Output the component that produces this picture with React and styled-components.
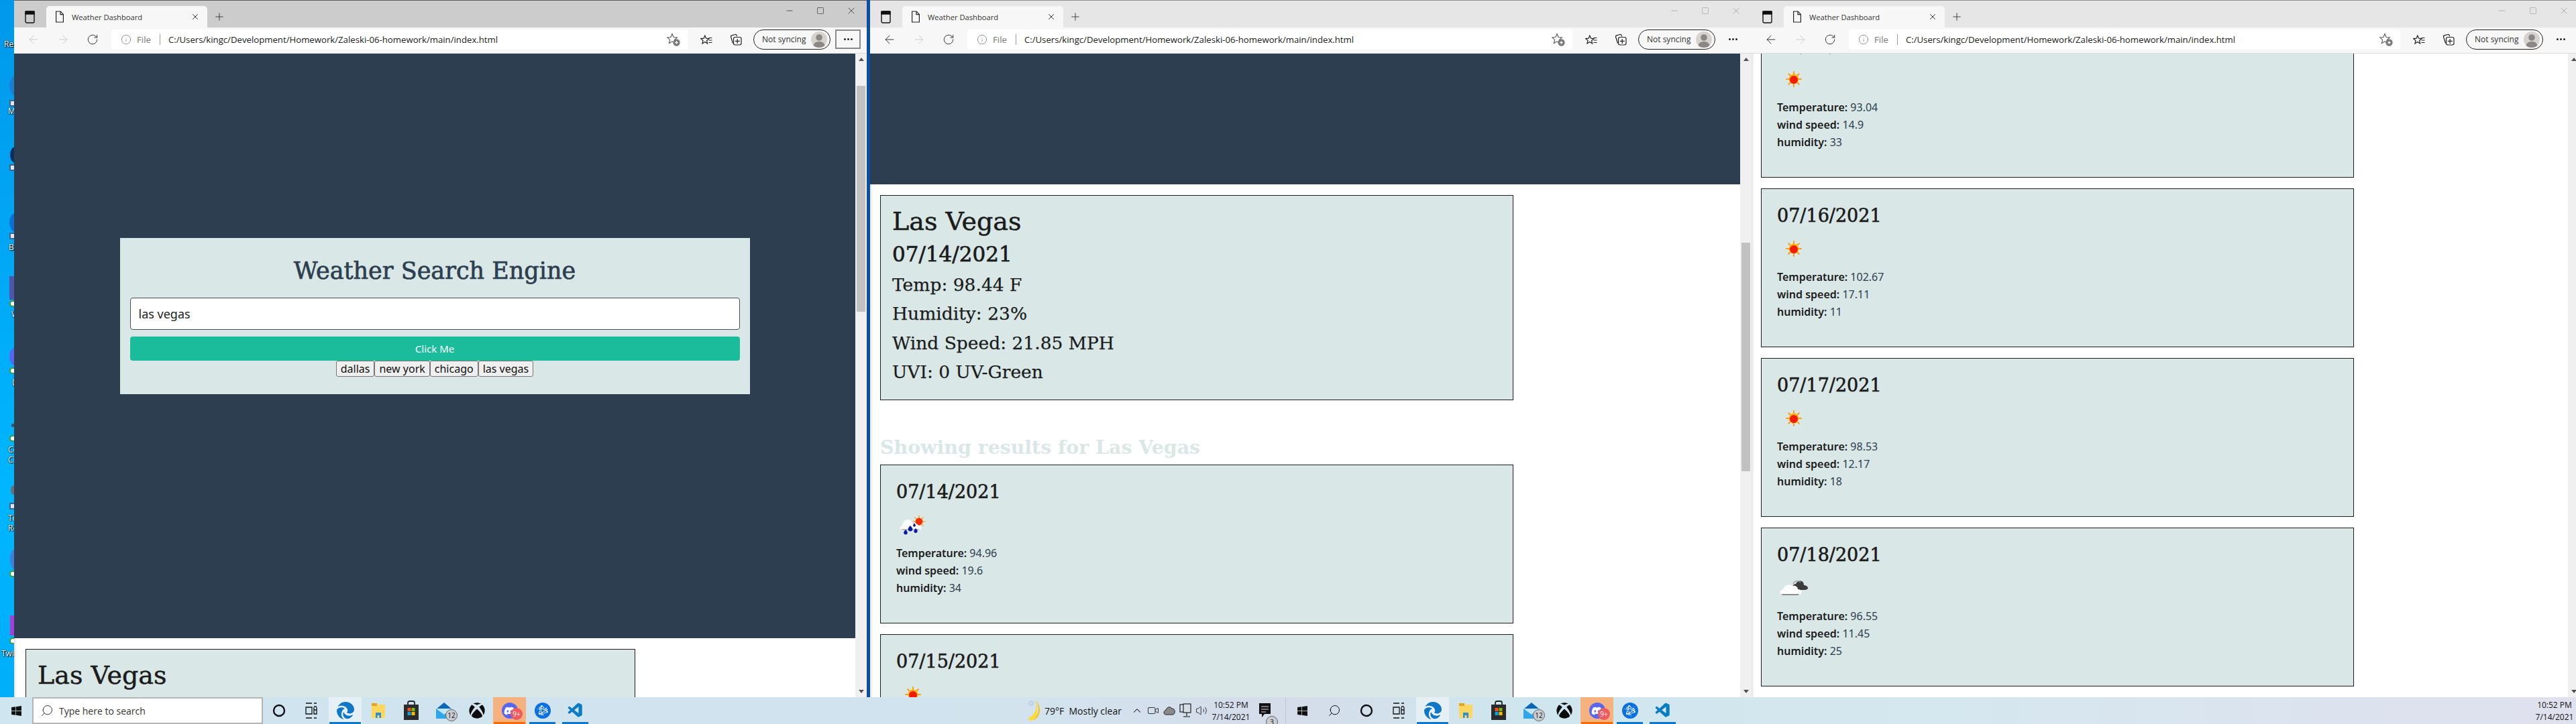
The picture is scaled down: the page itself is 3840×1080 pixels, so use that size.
import React from 'react';
import styled, { createGlobalStyle } from 'styled-components';
import {
  ArrowLeft, ArrowRight, RotateCw, Info, Plus, X, Minus, Square, ChevronUp, Search, Video, Volume2,
} from 'lucide-react';
import { FaWindows, FaXbox, FaDiscord } from 'react-icons/fa';
import { FaEdge, FaBattleNet } from 'react-icons/fa6';
import { VscVscode } from 'react-icons/vsc';

const serif = '"DejaVu Serif", "Liberation Serif", serif';
const body = '"Noto Sans", "Open Sans", sans-serif';
const ui = '"Open Sans", "Noto Sans", sans-serif';

const GlobalStyle = createGlobalStyle`
  html, body { margin: 0; padding: 0; background: #00a8f2; }
  * { box-sizing: border-box; }
`;

const Screen = styled.div`
  width: 3840px;
  height: 1080px;
  display: flex;
  flex-direction: column;
  overflow: hidden;
  font-family: ${ui};
`;

const Desktop = styled.div`
  flex: 1;
  min-height: 0;
  display: flex;
`;

const DesktopStrip = styled.div`
  flex: 0 0 21px;
  position: relative;
  overflow: hidden;
  background: linear-gradient(180deg, #0098ea, #00b6ff 70%, #00aef8);
`;

const ShortcutBlob = styled.div`
  position: absolute;
  left: ${({ $x }) => $x}px;
  top: ${({ $y }) => $y}px;
  width: ${({ $w }) => $w}px;
  height: ${({ $h }) => $h}px;
  background: ${({ $color }) => $color};
  border-radius: ${({ $round }) => ($round ? '50%' : '0')};
`;

const ShortcutBadge = styled.div`
  position: absolute;
  left: 14px;
  top: ${({ $y }) => $y}px;
  width: 10px;
  height: 10px;
  background: ${({ $check }) => ($check ? '#fff' : '#dfe6ee')};
  border: 2px solid ${({ $check }) => ($check ? '#3d9a3d' : '#44618c')};
  border-radius: ${({ $check }) => ($check ? '50%' : '1px')};
`;

const DesktopLabel = styled.span`
  position: absolute;
  left: ${({ $x }) => $x}px;
  top: ${({ $y }) => $y}px;
  font-size: 12px;
  line-height: 14px;
  color: #fff;
  white-space: nowrap;
  text-shadow: 0 0 2px #000, 1px 1px 1px #000;
`;

const Window = styled.section`
  flex: 0 0 ${({ $width }) => $width}px;
  display: flex;
  flex-direction: column;
  min-width: 0;
  border-right: ${({ $active }) => ($active ? '5px solid #0a4fa0' : '0')};
  background: #fff;
`;

const TitleBar = styled.div`
  flex: 0 0 41px;
  display: flex;
  align-items: flex-end;
  padding-left: 48px;
  position: relative;
  border-top: 1px solid ${({ $active }) => ($active ? '#5c5c5c' : '#8e8e8e')};
  background: ${({ $active }) => ($active ? '#cccccc' : '#e6e6e6')};
`;

const TabActions = styled.span`
  position: absolute;
  left: 16px;
  top: 15px;
  display: flex;
`;

const Tab = styled.div`
  width: 240px;
  height: 32px;
  display: flex;
  align-items: center;
  padding: 0 11px 0 13px;
  gap: 11px;
  background: #f7f7f7;
  border-radius: 5px 5px 0 0;
  font-size: 11.2px;
  color: #333;
`;

const TabTitle = styled.span`
  flex: 1;
  white-space: nowrap;
`;

const NewTab = styled.span`
  margin-left: 9px;
  height: 32px;
  width: 18px;
  display: flex;
  align-items: center;
  justify-content: center;
  color: #333;
`;

const WindowControls = styled.div`
  margin-left: auto;
  align-self: flex-start;
  display: flex;
  color: ${({ $active }) => ($active ? '#222' : '#999')};
`;

const WindowControl = styled.span`
  width: 46px;
  height: 30px;
  display: flex;
  align-items: center;
  justify-content: center;
`;

const Toolbar = styled.div`
  flex: 0 0 39px;
  display: flex;
  align-items: center;
  padding: 0 9px 3px 7px;
  background: #f7f7f7;
  border-bottom: 1px solid #dcdcdc;
  color: #222;
`;

const NavButton = styled.span`
  flex: 0 0 44px;
  height: 30px;
  display: flex;
  align-items: center;
  justify-content: center;
  color: ${({ $disabled }) => ($disabled ? '#c8c8c8' : '#222')};
`;

const AddressBar = styled.div`
  flex: 1;
  min-width: 0;
  height: 30px;
  margin: 0 6px;
  display: flex;
  align-items: center;
  padding: 0 11px 0 14px;
  background: #fff;
  border-radius: 4px;
  font-size: 13.2px;
  color: #777;
`;

const FileLabel = styled.span`
  margin-left: 8px;
`;

const AddressRule = styled.span`
  width: 1px;
  height: 16px;
  margin: 0 12px 0 13px;
  background: #999;
`;

const Url = styled.span`
  flex: 1;
  color: #222;
  white-space: nowrap;
`;

const SyncPill = styled.div`
  flex: 0 0 115px;
  height: 30px;
  margin-left: 4px;
  display: flex;
  align-items: center;
  justify-content: space-between;
  padding: 0 4px 0 12px;
  border: 1.5px solid #222;
  border-radius: 15px;
  font-size: 12px;
  color: #333;
  white-space: nowrap;
`;

const MoreButton = styled.span`
  flex: 0 0 38px;
  height: 29px;
  margin-left: 7px;
  display: flex;
  align-items: center;
  justify-content: center;
  gap: 2px;
  border: 2px solid ${({ $active }) => ($active ? '#8a8a8a' : 'transparent')};
`;

const MoreDot = styled.i`
  width: 3px;
  height: 3px;
  border-radius: 50%;
  background: #222;
`;

const WindowBody = styled.div`
  flex: 1;
  min-height: 0;
  display: flex;
`;

const PageView = styled.div`
  flex: 1;
  min-width: 0;
  overflow: hidden;
  background: #fff;
  box-shadow: inset 4px 0 4px -3px rgba(0, 0, 0, 0.18);
`;

const Page = styled.div`
  margin-top: ${({ $scroll }) => -$scroll}px;
`;

const Hero = styled.div`
  height: ${({ $height }) => $height}px;
  padding-top: ${({ $pad }) => $pad || 0}px;
  background: #2c3e50;
`;

const SearchCard = styled.form`
  width: 939px;
  height: 233px;
  margin: 0 auto;
  padding: 24px 15px 0;
  background: #d9e8e6;
`;

const SearchTitle = styled.h1`
  margin: 0;
  height: 54px;
  font: 400 35px/50px ${serif};
  color: #2c3e50;
  text-align: center;
  white-space: nowrap;
  -webkit-text-stroke: 0.7px #2c3e50;
`;

const SearchInput = styled.input`
  display: block;
  width: 100%;
  height: 48px;
  margin-top: 11px;
  padding: 0 12px;
  border: 1px solid #4a4f55;
  border-radius: 4px;
  background: #fff;
  font: 400 18px ${body};
  color: #222;
`;

const SubmitButton = styled.button`
  display: block;
  width: 100%;
  height: 36px;
  margin-top: 10px;
  border: 0;
  border-radius: 4px;
  background: #1abc9c;
  color: #fff;
  font: 400 15px ${body};
`;

const HistoryRow = styled.div`
  display: flex;
  justify-content: center;
`;

const HistoryButton = styled.button`
  height: 24px;
  padding: 0 6px;
  border: 1.5px solid #777;
  border-radius: 3px;
  background: #efefef;
  color: #111;
  font: 400 16px/20px ${body};
  white-space: nowrap;
`;

const PageContent = styled.div`
  padding: 16px 0 0 ${({ $inset }) => $inset}px;
`;

const CurrentCard = styled.article`
  width: ${({ $width }) => $width}px;
  height: 306px;
  padding: 12px 17px;
  border: 1px solid #1c1c1c;
  background: #d9e8e6;
  color: #1b1b1b;
`;

const CityName = styled.h2`
  margin: 0;
  font: 400 38px/52px ${serif};
  white-space: nowrap;
  -webkit-text-stroke: 0.5px #1b1b1b;
`;

const CurrentDate = styled.h3`
  margin: 0;
  font: 400 31px/47px ${serif};
  white-space: nowrap;
  -webkit-text-stroke: 0.7px #1b1b1b;
`;

const Stat = styled.p`
  margin: 0;
  font: 400 26.5px/43.3px ${serif};
  white-space: nowrap;
  -webkit-text-stroke: 0.25px #1b1b1b;
`;

const ResultsHeading = styled.h3`
  margin: 0;
  padding-top: 52px;
  height: 96px;
  font: 700 28.4px/36px ${serif};
  color: #d9e8e6;
  white-space: nowrap;
`;

const ForecastCard = styled.article`
  width: ${({ $width }) => $width}px;
  height: 237px;
  margin-bottom: 16px;
  padding: 24px 23px 0;
  border: 1px solid #1c1c1c;
  background: #d9e8e6;
  color: #1b1b1b;
`;

const ForecastDate = styled.h4`
  margin: 0;
  font: 400 27px/32px ${serif};
  -webkit-text-stroke: 0.6px #1b1b1b;
`;

const WeatherBox = styled.div`
  width: 50px;
  height: 50px;
  margin: 8px 0 4px;
`;

const ForecastLine = styled.p`
  margin: 0;
  font: 400 16px/26px ${body};
  color: #2c3e50;
`;

const ForecastLabel = styled.b`
  font-weight: 600;
  color: #1b1b1b;
`;

const Scrollbar = styled.div`
  flex: 0 0 17px;
  display: flex;
  flex-direction: column;
  align-items: center;
  background: #f0f0f0;
`;

const ScrollArrow = styled.span`
  flex: 0 0 17px;
  display: flex;
  align-items: center;
  justify-content: center;
  margin-top: ${({ $end }) => ($end ? 'auto' : '0')};
  &::before {
    content: '';
    border-left: 4px solid transparent;
    border-right: 4px solid transparent;
    ${({ $end }) => ($end ? 'border-top: 5px solid #505050;' : 'border-bottom: 5px solid #505050;')}
  }
`;

const ScrollThumb = styled.span`
  width: 13px;
  margin-top: ${({ $top }) => $top}px;
  height: ${({ $height }) => $height}px;
  background: #c1c1c1;
`;

const Taskbar = styled.footer`
  flex: 0 0 40px;
  display: flex;
  background: linear-gradient(90deg, #cfe5ef, #d2e3ee 40%, #d5dcea 50%, #cfe6ee 58%, #d5e7ef 75%, #e0e1ee);
  color: #111;
`;

const TaskbarSegment = styled.div`
  display: flex;
  align-items: stretch;
  flex: ${({ $grow }) => ($grow ? '1' : '0 0 1917px')};
  border-right: ${({ $grow }) => ($grow ? '0' : '1px solid #bcc8d4')};
`;

const TaskButton = styled.span`
  flex: 0 0 48px;
  display: flex;
  align-items: center;
  justify-content: center;
`;

const SearchBox = styled.div`
  flex: 0 0 344px;
  display: flex;
  align-items: center;
  gap: 8px;
  padding-left: 10px;
  background: #fff;
  border: 2px solid #b4b4b4;
  font-size: 14px;
  color: #333;
`;

const AppList = styled.div`
  display: flex;
  padding-left: ${({ $offset }) => $offset}px;
`;

const AppButton = styled.span`
  flex: 0 0 49px;
  position: relative;
  display: flex;
  align-items: center;
  justify-content: center;
  background: ${({ $bg }) => $bg || 'transparent'};
  &::after {
    content: '';
    display: ${({ $bar }) => ($bar ? 'block' : 'none')};
    position: absolute;
    left: ${({ $wide }) => ($wide ? '1px' : '5px')};
    right: ${({ $wide }) => ($wide ? '1px' : '5px')};
    bottom: 0;
    height: 3px;
    background: ${({ $bar }) => $bar};
  }
`;

const AppBadge = styled.span`
  position: absolute;
  left: ${({ $x }) => $x}px;
  top: ${({ $y }) => $y}px;
  width: 18px;
  height: 18px;
  display: flex;
  align-items: center;
  justify-content: center;
  border-radius: 50%;
  font-size: 10px;
  color: ${({ $red }) => ($red ? '#fff' : '#111')};
  background: ${({ $red }) => ($red ? '#ef5a5f' : '#c9ccd0')};
  border: ${({ $red }) => ($red ? '0' : '1px solid #666')};
`;

const CircleLogo = styled.span`
  width: 24px;
  height: 24px;
  border-radius: 50%;
  display: flex;
  align-items: center;
  justify-content: center;
  color: #fff;
  background: ${({ $color }) => $color};
`;

const Tray = styled.div`
  margin-left: auto;
  display: flex;
  align-items: center;
  padding-right: 11px;
`;

const WeatherTray = styled.div`
  flex: 0 0 153px;
  display: flex;
  align-items: center;
  gap: 7px;
  font-size: 14px;
  white-space: nowrap;
`;

const TrayIcon = styled.span`
  flex: 0 0 24px;
  display: flex;
  justify-content: center;
`;

const Clock = styled.div`
  flex: 0 0 64px;
  align-self: stretch;
  display: flex;
  flex-direction: column;
  align-items: center;
  justify-content: center;
  gap: 3px;
  font-size: 12px;
  line-height: 15px;
  margin-left: auto;
`;

const NotifyButton = styled.span`
  flex: 0 0 38px;
  position: relative;
  display: flex;
  align-items: center;
  justify-content: center;
`;

const DocIcon = () => (
  <svg width="14" height="18" viewBox="0 0 14 18" fill="none" stroke="#222" strokeWidth="1.2">
    <path d="M1.6 1h6.6l4.2 4.4v11.6H1.6z" />
    <path d="M8 1v4.6h4.4" />
  </svg>
);

const TabActionIcon = () => (
  <svg width="15" height="19" viewBox="0 0 15 19" fill="none" stroke="#111" strokeWidth="1.4">
    <rect x="1" y="1" width="13" height="17" rx="2" />
    <rect x="1" y="1" width="13" height="4" fill="#111" />
  </svg>
);

const AddFavIcon = () => (
  <svg width="20" height="20" viewBox="0 0 20 20" fill="none" stroke="#555" strokeWidth="1.1">
    <path d="M8 1.5l2.1 5 5.3.4-4 3.5 1.2 5.2L8 12.8 3.4 15.6l1.2-5.2-4-3.5 5.3-.4z" />
    <circle cx="14.5" cy="14.5" r="4.6" fill="#777" stroke="#777" />
    <path d="M14.5 12.2v4.6M12.2 14.5h4.6" stroke="#fff" strokeWidth="1.3" />
  </svg>
);

const FavoritesIcon = () => (
  <svg width="18" height="18" viewBox="0 0 18 18" fill="none" stroke="#222" strokeWidth="1.2">
    <path d="M6.8 1.5l1.8 4.2 4.3.4-3.3 2.9 1 4.4-3.8-2.4-3.8 2.4 1-4.4L.8 6.1l4.3-.4z" transform="translate(0 1.5)" />
    <path d="M12.5 6.5h5M12.5 10h5M12.5 13.5h5" />
  </svg>
);

const CollectionsIcon = () => (
  <svg width="18" height="18" viewBox="0 0 18 18" fill="none" stroke="#222" strokeWidth="1.2">
    <path d="M4.5 14.5L1.6 5.2c-.3-1 .2-2 1.2-2.3l5-1.4c1-.3 2 .2 2.3 1.1l.6 1.6" />
    <rect x="5.5" y="5.5" width="11.5" height="11.5" rx="2.4" fill="#f7f7f7" />
    <path d="M11.2 8v7M7.8 11.4h7" />
  </svg>
);

const Avatar = () => (
  <svg width="24" height="24" viewBox="0 0 24 24">
    <circle cx="12" cy="12" r="12" fill="#d6d3cf" />
    <circle cx="12" cy="9" r="4.8" fill="#8a8784" />
    <path d="M3.5 21c1-4.5 4.5-6 8.5-6s7.5 1.5 8.5 6c-2 2-5 3-8.5 3s-6.5-1-8.5-3z" fill="#8a8784" />
  </svg>
);

const Sun = () => (
  <g>
    <g stroke="#ff9c12" strokeWidth="2" strokeLinecap="round">
      <path d="M25 14v4M25 32v4M14 25h4M32 25h4M17.2 17.2l2.8 2.8M30 30l2.800 2.800M32.800 17.200L30 20M20 30l-2.800 2.800" />
    </g>
    <circle cx="25" cy="25" r="7.400" fill="#ffb000" />
    <circle cx="25" cy="26" r="6" fill="#f21b00" />
  </g>
);

const Cloud = () => (
  <g>
    <path d="M23 28c-1-5 1-9 5-9 2-5 9-6 11-2 1 2 1 3 1 4 3 0 6 2 6 4 0 2-2 3-5 3z" fill="#3c3c3c" />
    <path d="M24 19c2-5 9-6 11-2" fill="none" stroke="#9a9a9a" strokeWidth="1.200" />
    <path d="M8 35c-5 0-5-7 1-8 2-6 9-9 14-5 4-1 8 1 8 5 6 0 8 8 2 8z" fill="#fdfdfd" />
    <path d="M6 34h27c-1 2-2 2-4 2H9c-1 0-2-1-3-2z" fill="#8d8d8d" />
  </g>
);

const RainSun = () => (
  <g>
    <g stroke="#ffa51c" strokeWidth="1.500" strokeLinecap="round">
      <path d="M34 11.500v3M34 25.500v2.500M25.500 20h3M39.500 20h3M28 14l2 2M40 14l-2 2M40 26l-2-2" />
    </g>
    <circle cx="34" cy="20" r="5.400" fill="#f52c00" />
    <path d="M9 33c-4.500 0-4.500-6 0-7 1-7 7-11 12-8 2 2 3 4 3 6 3-2 8-1 9 2 5 0 6 7 1 7z" fill="#fbfbfb" />
    <path d="M7 31h28c-1 2-2 2-3 2H10c-1 0-2-1-3-2z" fill="#bdbdbd" />
    <path d="M14 32c1.700 2 2.800 3 2.800 4.400a2.800 2.800 0 0 1-5.600 0c0-1.400 1.100-2.400 2.800-4.400z" fill="#0a1a9c" />
    <path d="M21 26c2 2.300 3.300 3.700 3.300 5.300a3.300 3.300 0 0 1-6.600 0c0-1.600 1.300-3 3.300-5.300z" fill="#0a1a9c" />
    <path d="M29 30c1.500 1.800 2.600 3 2.600 4.300a2.600 2.600 0 0 1-5.200 0c0-1.300 1.100-2.500 2.600-4.300z" fill="#0a1a9c" />
    <path d="M27 22.500c1.100 1.300 1.900 2.200 1.900 3.300a1.900 1.900 0 0 1-3.800 0c0-1.100.8-2 1.900-3.300z" fill="#0a1a9c" />
  </g>
);

const weatherArt = { sun: <Sun />, cloud: <Cloud />, rain: <RainSun /> };

const WeatherIcon = ({ kind }) => (
  <WeatherBox>
    <svg width="50" height="50" viewBox="0 0 50 50">{weatherArt[kind]}</svg>
  </WeatherBox>
);

const FolderIcon = () => (
  <svg width="24" height="26" viewBox="0 0 24 26">
    <path d="M2 2h7l2 2h11v20H2z" fill="#ffd75e" />
    <path d="M2 2h8v4H2z" fill="#e8a317" />
    <path d="M8 16h8v8h-2.500v-4h-3v4H8z" fill="#2a8fd8" />
  </svg>
);

const StoreIcon = () => (
  <svg width="24" height="30" viewBox="0 0 24 30">
    <path d="M7 7V3.500C7 2 8 1 9.500 1h5C16 1 17 2 17 3.500V7" fill="none" stroke="#222" strokeWidth="1.8" />
    <rect x="1" y="6" width="22" height="23" fill="#2b2b2b" />
    <rect x="6.500" y="11" width="5" height="5" fill="#f25022" />
    <rect x="12.500" y="11" width="5" height="5" fill="#7fba00" />
    <rect x="6.500" y="17" width="5" height="5" fill="#00a4ef" />
    <rect x="12.500" y="17" width="5" height="5" fill="#ffb900" />
  </svg>
);

const MailIcon = () => (
  <svg width="26" height="26" viewBox="0 0 26 26">
    <path d="M13 1l12 10H1z" fill="#0a66b8" />
    <rect x="1" y="10" width="24" height="15" fill="#2fa5ea" />
    <path d="M1 10l12 9 12-9z" fill="#bfe4fb" />
  </svg>
);

const CortanaIcon = () => (
  <svg width="20" height="20" viewBox="0 0 20 20" fill="none" stroke="#111" strokeWidth="2.400">
    <circle cx="10" cy="10" r="8" />
  </svg>
);

const TaskViewIcon = () => (
  <svg width="18" height="26" viewBox="0 0 18 26" fill="none" stroke="#111" strokeWidth="1.300">
    <path d="M1 2h9M1 24h9M1 8h9v10H1z" />
    <path d="M13 2h4M13 7h4M13 12h4M13 24h4" />
    <path d="M13 8v10h4V8" />
  </svg>
);

const MoonIcon = () => (
  <svg width="20" height="34" viewBox="0 0 20 34">
    <path d="M13 2c8 9 7 24-6 29 5 1 13-4 13-15C20 10 17 5 13 2z" fill="#f4c20d" />
    <path d="M13 2c4 9 2 20-11 27 3 3 5 3 8 2C17 27 19 12 13 2z" fill="#ffd83a" />
    <circle cx="7" cy="6" r="3.400" fill="#c8dcf0" stroke="#9ab" strokeWidth=".5" />
  </svg>
);

const OneDriveIcon = () => (
  <svg width="18" height="14" viewBox="0 0 18 14">
    <path d="M4 13c-4 0-4-6 0-6.500C5 2 10 0 13 4c3 0 5 2.500 4 6-.3 2-1.500 3-3 3z" fill="#8a8a8a" stroke="#222" />
  </svg>
);

const NetworkIcon = () => (
  <svg width="18" height="22" viewBox="0 0 18 22" fill="none" stroke="#111" strokeWidth="1.100">
    <rect x="1" y="2" width="7" height="11" />
    <rect x="6" y="1" width="11" height="13" fill="#d5dde9" />
    <path d="M11 14v5M6 20h10" />
  </svg>
);

const NotifyIcon = () => (
  <svg width="20" height="24" viewBox="0 0 20 24">
    <path d="M1 1h17v16H9l-4 5v-5H1z" fill="#111" />
    <path d="M4 6h11M4 10h11M4 14h7" stroke="#d5dde9" strokeWidth="1.200" />
  </svg>
);

const desktopItems = [
  { id: 'recycle', label: ['Re'], labelX: 6, labelY: 59 },
  { id: 'm', blob: [14, 113, 18, 30, '#1e7fd0', true], badge: 149, label: ['M'], labelX: 12, labelY: 159 },
  { id: 'dark', blob: [15, 219, 16, 24, '#0f2c5e', true], badge: 245 },
  { id: 'ba', blob: [14, 318, 18, 28, '#0c6fd4', true], badge: 347, label: ['Ba'], labelX: 13, labelY: 362 },
  { id: 'w', blob: [14, 412, 10, 35, '#4f55a8'], badge: 448, check: true, label: ['W'], labelX: 17, labelY: 462 },
  { id: 'd', blob: [14, 519, 16, 26, '#5865f2', true], badge: 548, check: true, label: ['D'], labelX: 18, labelY: 564 },
  { id: 'co', blob: [17, 632, 8, 5, '#44546c'], badge: 649, check: true, label: ['Co', 'Cl'], labelX: 12, labelY: 664 },
  { id: 'to', blob: [16, 724, 8, 14, '#66707a', true], badge: 750, label: ['To', 'Re'], labelX: 12, labelY: 766 },
  { id: 'blue', blob: [15, 820, 12, 29, '#3f7fd6', true], badge: 851, check: true },
  { id: 'twit', blob: [15, 918, 10, 30, '#a43fd6'], badge: 951, check: true, label: ['Twit'], labelX: 2, labelY: 968 },
];

const forecast = {
  '07/14/2021': { kind: 'rain', temp: '94.96', wind: '19.6', humidity: '34' },
  '07/15/2021': { kind: 'sun', temp: '93.04', wind: '14.9', humidity: '33' },
  '07/16/2021': { kind: 'sun', temp: '102.67', wind: '17.11', humidity: '11' },
  '07/17/2021': { kind: 'sun', temp: '98.53', wind: '12.17', humidity: '18' },
  '07/18/2021': { kind: 'cloud', temp: '96.55', wind: '11.45', humidity: '25' },
};

const Forecast = ({ date, width }) => {
  const day = forecast[date];
  return (
    <ForecastCard $width={width}>
      <ForecastDate>{date}</ForecastDate>
      <WeatherIcon kind={day.kind} />
      <ForecastLine><ForecastLabel>Temperature:</ForecastLabel> {day.temp}</ForecastLine>
      <ForecastLine><ForecastLabel>wind speed:</ForecastLabel> {day.wind}</ForecastLine>
      <ForecastLine><ForecastLabel>humidity:</ForecastLabel> {day.humidity}</ForecastLine>
    </ForecastCard>
  );
};

const Current = ({ width }) => (
  <CurrentCard $width={width}>
    <CityName>Las Vegas</CityName>
    <CurrentDate>07/14/2021</CurrentDate>
    <Stat>Temp: 98.44 F</Stat>
    <Stat>Humidity: 23%</Stat>
    <Stat>Wind Speed: 21.85 MPH</Stat>
    <Stat>UVI: 0 UV-Green</Stat>
  </CurrentCard>
);

const Browser = ({ width, active, thumb, children }) => (
  <Window $width={width} $active={active}>
    <TitleBar $active={active}>
      <TabActions><TabActionIcon /></TabActions>
      <Tab>
        <DocIcon />
        <TabTitle>Weather Dashboard</TabTitle>
        <X size={14} strokeWidth={1.6} color="#222" />
      </Tab>
      <NewTab><Plus size={18} strokeWidth={1.2} /></NewTab>
      <WindowControls $active={active}>
        <WindowControl><Minus size={14} strokeWidth={1.2} /></WindowControl>
        <WindowControl><Square size={12} strokeWidth={1.2} /></WindowControl>
        <WindowControl><X size={16} strokeWidth={1.1} /></WindowControl>
      </WindowControls>
    </TitleBar>
    <Toolbar>
      <NavButton $disabled={active}><ArrowLeft size={20} strokeWidth={1.1} /></NavButton>
      <NavButton $disabled><ArrowRight size={20} strokeWidth={1.1} /></NavButton>
      <NavButton><RotateCw size={18} strokeWidth={1.2} /></NavButton>
      <AddressBar>
        <Info size={16} strokeWidth={1.2} />
        <FileLabel>File</FileLabel>
        <AddressRule />
        <Url>C:/Users/kingc/Development/Homework/Zaleski-06-homework/main/index.html</Url>
        <AddFavIcon />
      </AddressBar>
      <NavButton><FavoritesIcon /></NavButton>
      <NavButton><CollectionsIcon /></NavButton>
      <SyncPill>Not syncing<Avatar /></SyncPill>
      <MoreButton $active={active}><MoreDot /><MoreDot /><MoreDot /></MoreButton>
    </Toolbar>
    <WindowBody>
      <PageView>{children}</PageView>
      <Scrollbar>
        <ScrollArrow />
        {thumb && <ScrollThumb $top={thumb[0]} $height={thumb[1]} />}
        <ScrollArrow $end />
      </Scrollbar>
    </WindowBody>
  </Window>
);

const Apps = ({ offset }) => (
  <AppList $offset={offset}>
    <AppButton $bg="rgba(255,255,255,0.45)" $bar="#0a78d0" $wide><FaEdge size={26} color="#1076c8" /></AppButton>
    <AppButton><FolderIcon /></AppButton>
    <AppButton><StoreIcon /></AppButton>
    <AppButton>
      <MailIcon />
      <AppBadge $x={27} $y={18}>12</AppBadge>
    </AppButton>
    <AppButton><FaXbox size={24} color="#0c0c0c" /></AppButton>
    <AppButton $bg="#f5b27e" $bar="#ff6a00" $wide>
      <CircleLogo $color="#5865f2"><FaDiscord size={17} /></CircleLogo>
      <AppBadge $x={26} $y={16} $red>9+</AppBadge>
    </AppButton>
    <AppButton $bar="#0a78d0"><CircleLogo $color="#0a6fe0"><FaBattleNet size={17} /></CircleLogo></AppButton>
    <AppButton $bar="#0a78d0"><VscVscode size={26} color="#0a7cc4" /></AppButton>
  </AppList>
);

const App = () => (
  <Screen>
    <GlobalStyle />
    <Desktop>
      <DesktopStrip>
        {desktopItems.map((item) => (
          <React.Fragment key={item.id}>
            {item.blob && (
              <ShortcutBlob
                $x={item.blob[0]}
                $y={item.blob[1]}
                $w={item.blob[2]}
                $h={item.blob[3]}
                $color={item.blob[4]}
                $round={item.blob[5]}
              />
            )}
            {item.badge && <ShortcutBadge $y={item.badge} $check={item.check} />}
            {item.label && item.label.map((text, i) => (
              <DesktopLabel key={text} $x={item.labelX} $y={item.labelY + i * 15}>{text}</DesktopLabel>
            ))}
          </React.Fragment>
        ))}
      </DesktopStrip>

      <Browser width={1276} active thumb={[31, 337]}>
        <Hero $height={872} $pad={275}>
          <SearchCard onSubmit={(e) => e.preventDefault()}>
            <SearchTitle>Weather Search Engine</SearchTitle>
            <SearchInput defaultValue="las vegas" />
            <SubmitButton>Click Me</SubmitButton>
            <HistoryRow>
              <HistoryButton type="button">dallas</HistoryButton>
              <HistoryButton type="button">new york</HistoryButton>
              <HistoryButton type="button">chicago</HistoryButton>
              <HistoryButton type="button">las vegas</HistoryButton>
            </HistoryRow>
          </SearchCard>
        </Hero>
        <PageContent $inset={17}>
          <Current width={909} />
        </PageContent>
      </Browser>

      <Browser width={1314} thumb={[265, 341]}>
        <Hero $height={195} />
        <PageContent $inset={15}>
          <Current width={944} />
          <ResultsHeading>Showing results for Las Vegas</ResultsHeading>
          <Forecast date="07/14/2021" width={944} />
          <Forecast date="07/15/2021" width={944} />
        </PageContent>
      </Browser>

      <Browser width={1234}>
        <Page $scroll={68}>
          <PageContent $inset={14}>
            <Forecast date="07/15/2021" width={884} />
            <Forecast date="07/16/2021" width={884} />
            <Forecast date="07/17/2021" width={884} />
            <Forecast date="07/18/2021" width={884} />
          </PageContent>
        </Page>
      </Browser>
    </Desktop>

    <Taskbar>
      <TaskbarSegment>
        <TaskButton><FaWindows size={17} /></TaskButton>
        <SearchBox>
          <Search size={20} strokeWidth={1.2} transform="scale(-1 1)" />
          Type here to search
        </SearchBox>
        <TaskButton><CortanaIcon /></TaskButton>
        <TaskButton><TaskViewIcon /></TaskButton>
        <Apps offset={2} />
        <Tray>
          <WeatherTray><MoonIcon />79°F&nbsp; Mostly clear</WeatherTray>
          <TrayIcon><ChevronUp size={18} strokeWidth={1.4} /></TrayIcon>
          <TrayIcon><Video size={18} strokeWidth={1.1} /></TrayIcon>
          <TrayIcon><OneDriveIcon /></TrayIcon>
          <TrayIcon><NetworkIcon /></TrayIcon>
          <TrayIcon><Volume2 size={18} strokeWidth={1.1} /></TrayIcon>
          <Clock><span>10:52 PM</span><span>7/14/2021</span></Clock>
          <NotifyButton>
            <NotifyIcon />
            <AppBadge $x={20} $y={20}>3</AppBadge>
          </NotifyButton>
        </Tray>
      </TaskbarSegment>
      <TaskbarSegment $grow>
        <TaskButton><FaWindows size={17} /></TaskButton>
        <TaskButton><Search size={20} strokeWidth={1.2} transform="scale(-1 1)" /></TaskButton>
        <TaskButton><CortanaIcon /></TaskButton>
        <TaskButton><TaskViewIcon /></TaskButton>
        <Apps offset={2} />
        <Clock><span>10:52 PM</span><span>7/14/2021</span></Clock>
      </TaskbarSegment>
    </Taskbar>
  </Screen>
);

export default App;
